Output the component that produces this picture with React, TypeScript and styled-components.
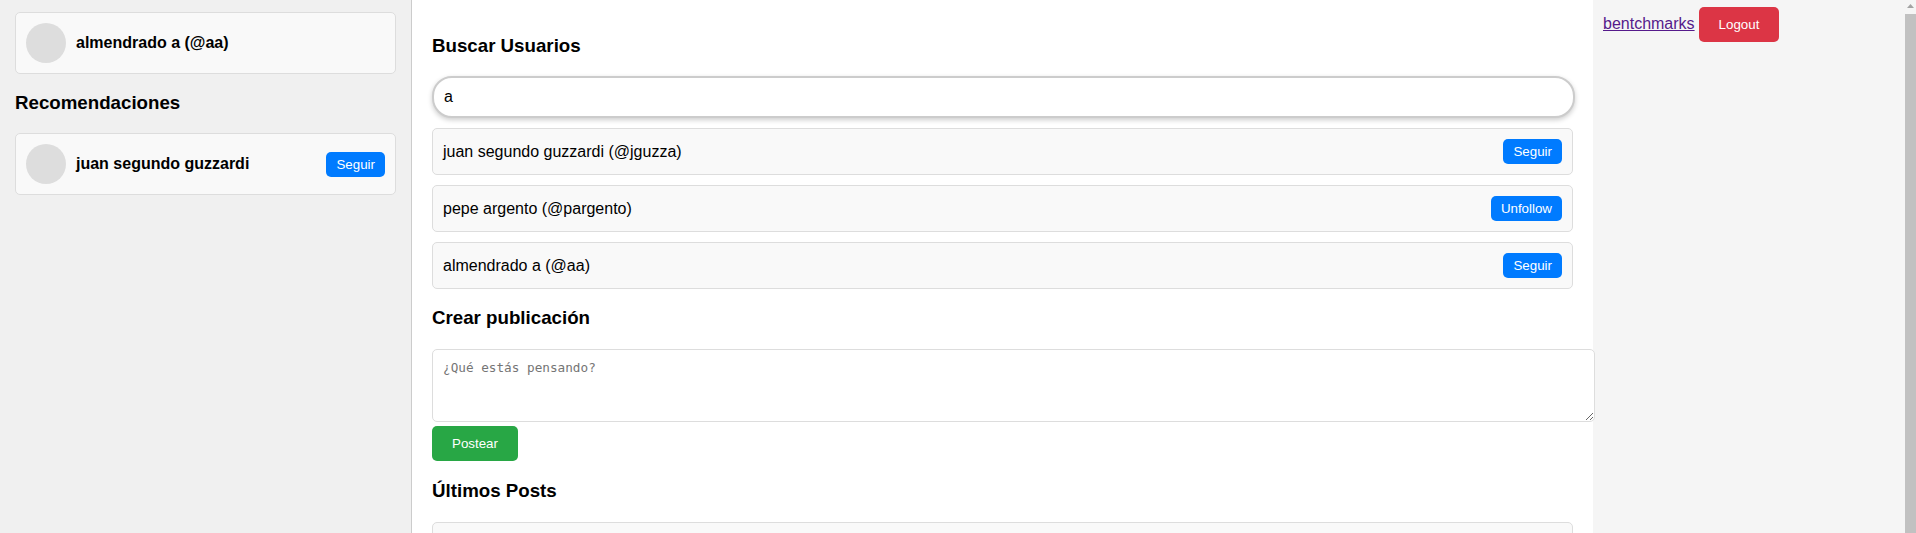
import styled, { createGlobalStyle } from 'styled-components';

type UserResult = {
  name: string,
  handle: string,
  action: string,
}

const results: UserResult[] = [
  { name: 'juan segundo guzzardi', handle: 'jguzza', action: 'Seguir' },
  { name: 'pepe argento', handle: 'pargento', action: 'Unfollow' },
  { name: 'almendrado a', handle: 'aa', action: 'Seguir' },
];

const GlobalStyle = createGlobalStyle`
  html, body {
    margin: 0;
    height: 533px;
    overflow: hidden;
    background: #fff;
    font-family: "Liberation Sans", Arial, sans-serif;
    font-size: 16px;
    color: #000;
  }
`;

const Page = styled.div`
  display: flex;
  width: 1916px;
  height: 533px;
  overflow: hidden;
`;

const Sidebar = styled.aside`
  flex: 0 0 412px;
  box-sizing: border-box;
  padding: 12px 15px 0;
  background: #f0f0f0;
  border-right: 1px solid #ccc;
`;

const Main = styled.main`
  flex: 0 0 1181px;
  min-width: 0;
  z-index: 1;
  box-sizing: border-box;
  padding: 17px 20px 0;
  background: #fff;
`;

const RightPanel = styled.aside`
  flex: 0 0 312px;
  box-sizing: border-box;
  padding: 7px 10px 0;
  background: #f5f5f5;
`;

const Heading = styled.h3<{ $top?: number, $bottom?: number }>`
  margin: ${({ $top = 18 }) => $top}px 0 ${({ $bottom = 20 }) => $bottom}px;
  font-size: 18.72px;
  font-weight: bold;
`;

const ProfileCard = styled.div`
  display: flex;
  align-items: center;
  padding: 10px;
  background: #f9f9f9;
  border: 1px solid #ddd;
  border-radius: 5px;
`;

const Avatar = styled.div`
  flex: none;
  width: 40px;
  height: 40px;
  margin-right: 10px;
  border-radius: 50%;
  background: #ddd;
`;

const ProfileName = styled.span`
  flex: 1;
  font-weight: bold;
`;

const Button = styled.button<{ $color: string, $large?: boolean }>`
  padding: ${({ $large }) => ($large ? '10px 20px' : '5px 10px')};
  border: none;
  border-radius: 5px;
  background: ${({ $color }) => $color};
  color: #fff;
  font-family: "Liberation Sans", Arial, sans-serif;
  font-size: 13.333px;
  cursor: pointer;
`;

const SearchInput = styled.input`
  display: block;
  box-sizing: border-box;
  width: 1143px;
  height: 42px;
  padding: 0 10px;
  border: 2px solid #ccc;
  border-radius: 20px;
  box-shadow: 0 2px 5px rgba(0, 0, 0, .2);
  outline: none;
  font-family: "Liberation Sans", Arial, sans-serif;
  font-size: 16px;
  color: #000;
`;

const ResultList = styled.div`
  display: flex;
  flex-direction: column;
  gap: 10px;
  width: 1141px;
  margin-top: 10px;
`;

const ResultRow = styled.div`
  display: flex;
  align-items: center;
  justify-content: space-between;
  padding: 10px;
  background: #f9f9f9;
  border: 1px solid #ddd;
  border-radius: 5px;
`;

const PostInput = styled.textarea`
  display: block;
  box-sizing: border-box;
  width: 1163px;
  height: 73px;
  padding: 10px;
  background: #fff;
  border: 1px solid #ddd;
  border-radius: 5px;
  outline: none;
  font-family: "DejaVu Sans Mono", monospace;
  font-size: 12.7px;
`;

const PostButton = styled(Button)`
  display: block;
  margin-top: 4px;
`;

const PostCard = styled.div`
  box-sizing: border-box;
  width: 1141px;
  height: 60px;
  background: #f9f9f9;
  border: 1px solid #ddd;
  border-radius: 5px;
`;

const BenchLink = styled.a`
  color: #551a8b;
  text-decoration: underline;
  margin-right: 4px;
`;

const ScrollTrack = styled.div`
  flex: 0 0 11px;
  display: flex;
  flex-direction: column;
  background: #f5f5f5;
`;

const ScrollArrow = styled.svg`
  display: block;
  flex: none;
  width: 11px;
  height: 14px;
`;

const ScrollThumb = styled.div`
  flex: 1;
  background: #c1c1c1;
`;

export default function App() {
  return (
    <>
      <GlobalStyle />
      <Page>
        <Sidebar>
          <ProfileCard>
            <Avatar />
            <ProfileName>almendrado a (@aa)</ProfileName>
          </ProfileCard>
          <Heading $bottom={19}>Recomendaciones</Heading>
          <ProfileCard>
            <Avatar />
            <ProfileName>juan segundo guzzardi</ProfileName>
            <Button $color="#007bff">Seguir</Button>
          </ProfileCard>
        </Sidebar>

        <Main>
          <Heading $bottom={19}>Buscar Usuarios</Heading>
          <SearchInput value="a" readOnly />
          <ResultList>
            {results.map((user) => (
              <ResultRow key={user.handle}>
                <span>{user.name} (@{user.handle})</span>
                <Button $color="#007bff">{user.action}</Button>
              </ResultRow>
            ))}
          </ResultList>

          <Heading>Crear publicación</Heading>
          <PostInput placeholder="¿Qué estás pensando?" />
          <PostButton $color="#28a745" $large>Postear</PostButton>

          <Heading $top={19} $bottom={20}>Últimos Posts</Heading>
          <PostCard />
        </Main>

        <RightPanel>
          <BenchLink href="#">bentchmarks</BenchLink>
          <Button $color="#dc3545" $large>Logout</Button>
        </RightPanel>

        <ScrollTrack>
          <ScrollArrow viewBox="0 0 11 14">
            <path d="M5.5 4 L9 8 H2 Z" fill="#a3a3a3" />
          </ScrollArrow>
          <ScrollThumb />
        </ScrollTrack>
      </Page>
    </>
  );
}
